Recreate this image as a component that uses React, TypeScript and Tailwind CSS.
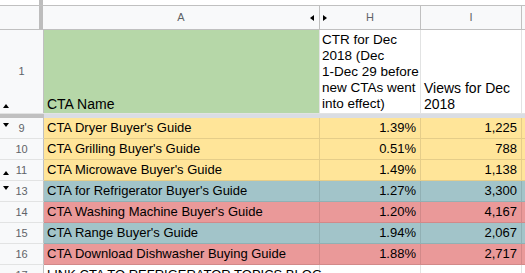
import React from 'react';

type Row = {
  num: string;
  name: string;
  ctr: string;
  views: string;
  bg: string;
  mark?: 'up' | 'down';
};

const rows: Row[] = [
  { num: '9', name: "CTA Dryer Buyer's Guide", ctr: '1.39%', views: '1,225', bg: 'bg-[#ffe599]', mark: 'down' },
  { num: '10', name: "CTA Grilling Buyer's Guide", ctr: '0.51%', views: '788', bg: 'bg-[#ffe599]' },
  { num: '11', name: "CTA Microwave Buyer's Guide", ctr: '1.49%', views: '1,138', bg: 'bg-[#ffe599]', mark: 'up' },
  { num: '13', name: "CTA for Refrigerator Buyer's Guide", ctr: '1.27%', views: '3,300', bg: 'bg-[#a2c4c9]', mark: 'down' },
  { num: '14', name: "CTA Washing Machine Buyer's Guide", ctr: '1.20%', views: '4,167', bg: 'bg-[#ea9999]' },
  { num: '15', name: "CTA Range Buyer's Guide", ctr: '1.94%', views: '2,067', bg: 'bg-[#a2c4c9]' },
  { num: '16', name: 'CTA Download Dishwasher Buying Guide', ctr: '1.88%', views: '2,717', bg: 'bg-[#ea9999]' },
];

const Tri = ({ dir, className }: { dir: 'up' | 'down' | 'left' | 'right'; className: string }) => {
  const pts = {
    up: '0,4 3,0 6,4',
    down: '0,0 6,0 3,4',
    left: '4,0 4,6 0,3',
    right: '0,0 0,6 4,3',
  }[dir];
  const wide = dir === 'up' || dir === 'down';
  return (
    <svg
      className={`absolute ${className}`}
      width={wide ? 6 : 4}
      height={wide ? 4 : 6}
      viewBox={wide ? '0 0 6 4' : '0 0 4 6'}
    >
      <polygon points={pts} fill="#000" />
    </svg>
  );
};

export default function App() {
  return (
    <div className="w-[525px] h-[273px] overflow-hidden bg-white font-['Liberation_Sans',Arial,sans-serif] text-[13px] text-black">
      {/* strip above headers */}
      <div className="flex h-[6px] border-b border-[#c0c0c0]">
        <div className="w-[39px]" />
        <div className="w-[4px] bg-[#bdbdbd]" />
        <div className="flex-1" />
      </div>

      {/* column headers */}
      <div className="flex h-[24px] border-b border-[#c0c0c0] bg-[#f8f9fa] text-[11px] text-[#5f6368]">
        <div className="w-[39px]" />
        <div className="w-[4px] bg-[#bdbdbd]" />
        <div className="relative w-[277px] flex items-center justify-center border-r border-[#c0c0c0]">
          A
          <Tri dir="left" className="right-[5px] top-[9px]" />
        </div>
        <div className="relative w-[101px] flex items-center justify-center border-r border-[#c0c0c0]">
          H
          <Tri dir="right" className="left-[3px] top-[9px]" />
        </div>
        <div className="w-[101px] flex items-center justify-center border-r border-[#c0c0c0]">I</div>
        <div className="flex-1" />
      </div>

      {/* row 1 header row */}
      <div className="flex h-[84px] border-b border-[#e2e3e3]">
        <div className="relative w-[44px] flex items-center justify-center bg-[#f8f9fa] border-r border-[#c0c0c0] text-[11px] text-[#5f6368]">
          1
          <Tri dir="up" className="left-[3px] bottom-[5px]" />
        </div>
        <div className="w-[276px] flex items-end bg-[#b6d7a8] border-r border-[#e2e3e3] px-[3px] pb-[1px] text-[14px] leading-[16px]">
          CTA Name
        </div>
        <div className="w-[101px] flex flex-col justify-end border-r border-[#e2e3e3] pl-[2px] pb-[1px] text-[13.5px] leading-[16px] whitespace-nowrap">
          <span>CTR for Dec</span>
          <span>2018 (Dec</span>
          <span>1-Dec 29 before</span>
          <span>new CTAs went</span>
          <span>into effect)</span>
        </div>
        <div className="w-[101px] flex flex-col justify-end border-r border-[#e2e3e3] pl-[3px] pb-[1px] text-[14px] leading-[16px] whitespace-nowrap">
          <span>Views for Dec</span>
          <span>2018</span>
        </div>
        <div className="flex-1" />
      </div>

      {/* frozen divider */}
      <div className="flex h-[4px]">
        <div className="w-[44px] bg-[#c0c0c0]" />
        <div className="flex-1 bg-[#dadde3]" />
      </div>

      {rows.map((r) => (
        <div key={r.num} className="flex h-[21px]">
          <div className="relative w-[44px] flex items-center justify-center bg-[#f8f9fa] border-r border-b border-r-[#c0c0c0] border-b-[#e2e3e3] text-[11px] text-[#5f6368]">
            {r.num}
            {r.mark === 'down' && <Tri dir="down" className="left-[3px] top-[5px]" />}
            {r.mark === 'up' && <Tri dir="up" className="left-[3px] top-[11px]" />}
          </div>
          <div className={`flex flex-1 ${r.bg}`}>
            <div className="w-[276px] border-r border-b border-black/10 px-[3px] leading-[20px] whitespace-nowrap overflow-hidden">
              {r.name}
            </div>
            <div className="w-[101px] border-r border-b border-black/10 pr-[4px] leading-[20px] text-right">
              {r.ctr}
            </div>
            <div className="w-[101px] border-r border-b border-black/10 pr-[4px] leading-[20px] text-right">
              {r.views}
            </div>
            <div className="flex-1 border-b border-black/10" />
          </div>
        </div>
      ))}

      {/* row 17, cut off at the window edge */}
      <div className="flex h-[21px]">
        <div className="w-[44px] flex items-center justify-center bg-[#f8f9fa] border-r border-[#c0c0c0] text-[11px] text-[#5f6368]">
          17
        </div>
        <div className="w-[276px] border-r border-[#e2e3e3] px-[3px] leading-[20px] whitespace-nowrap">
          LINK CTA TO REFRIGERATOR TOPICS BLOG
        </div>
        <div className="w-[101px] border-r border-[#e2e3e3]" />
        <div className="w-[101px] border-r border-[#e2e3e3]" />
        <div className="flex-1" />
      </div>
    </div>
  );
}
